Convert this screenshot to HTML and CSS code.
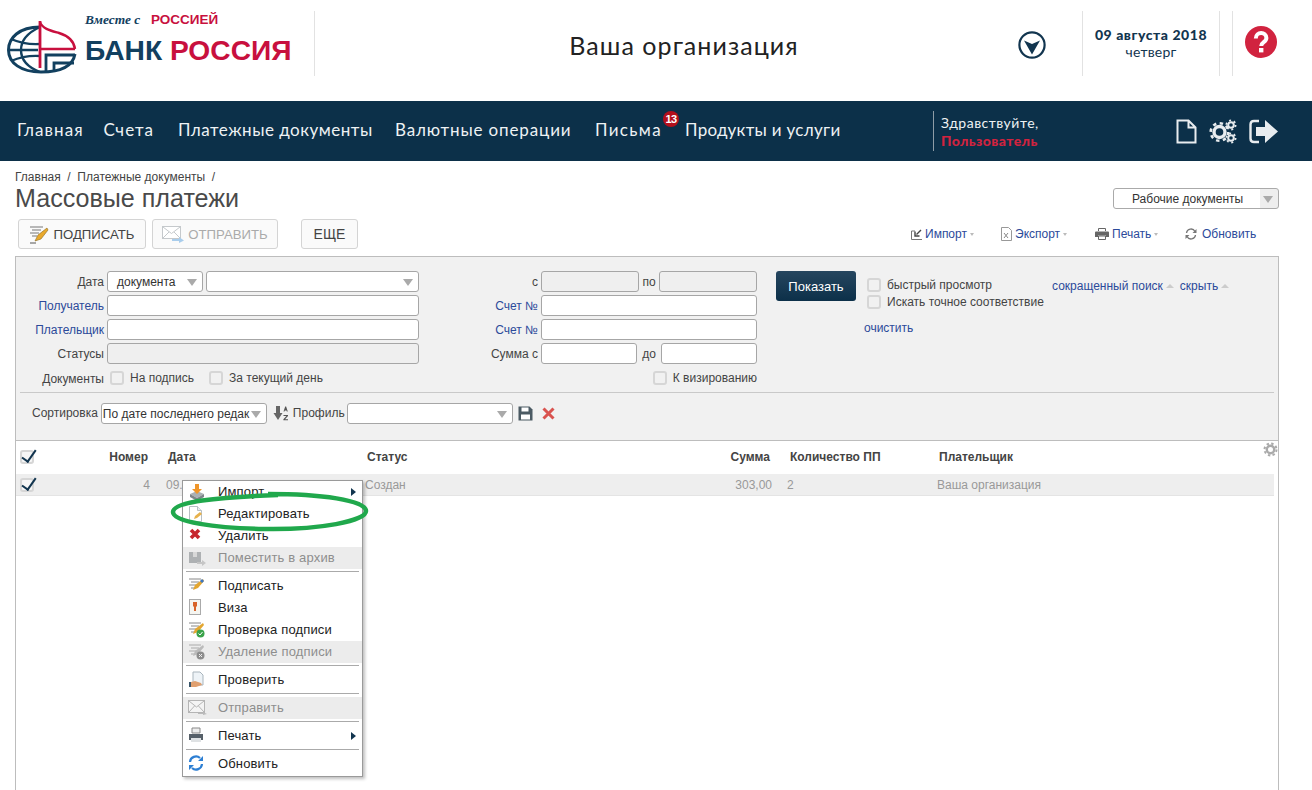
FILE: index.html
```html
<!DOCTYPE html>
<html lang="ru">
<head>
<meta charset="utf-8">
<title>Массовые платежи</title>
<link rel="stylesheet" href="styles.css">
</head>
<body>
<header class="top">
  <div class="logo">
    <svg class="logo-mark" width="70" height="53" viewBox="0 0 70 53">
      <path d="M33 6C12 6 1.500 17 1.500 29c0 13 12.500 22 32.500 22 21 0 32-7 34-18" fill="none" stroke="#12405f" stroke-width="3"/>
      <path d="M33 6C20 12 14 20 14 29s6 17 19 22" fill="none" stroke="#12405f" stroke-width="2.400"/>
      <path d="M4 18q14 6 29 5M4 40q14-6 29-5M1 29h30" fill="none" stroke="#12405f" stroke-width="2.400"/>
      <path d="M39 50V34h29M47 50V42h20" fill="none" stroke="#12405f" stroke-width="2.800"/>
      <path d="M33 0v47" stroke="#c8103e" stroke-width="2.800"/>
      <path d="M33 1c2 7 12 9 19 11 10 3 15 9 16 16" fill="none" stroke="#c8103e" stroke-width="2.400"/>
      <path d="M33 28h35" stroke="#c8103e" stroke-width="2.400"/>
    </svg>
    <div class="logo-text">
      <div class="tag"><em>Вместе с</em> <b>РОССИЕЙ</b></div>
      <div class="bank">БАНК <span>РОССИЯ</span></div>
    </div>
  </div>
  <div class="org">Ваша организация</div>
  <svg class="org-toggle" width="28" height="28" viewBox="0 0 28 28">
    <circle cx="14" cy="14" r="12.600" fill="none" stroke="#12354f" stroke-width="2.200"/>
    <path d="M6 9.500l8 3.500 8-3.500-8 14z" fill="#12354f"/>
  </svg>
  <div class="date"><b>09 августа 2018</b><span>четверг</span></div>
  <div class="help">
    <svg width="32" height="32" viewBox="0 0 32 32">
      <circle cx="16" cy="16" r="16" fill="#d1233f"/>
      <path d="M10.800 12.400c0-7 10.600-7 10.600-.4 0 4.400-5.200 4-5.200 8" fill="none" stroke="#fff" stroke-width="4"/>
      <rect x="14" y="22" width="4.400" height="4.400" fill="#fff"/>
    </svg>
  </div>
</header>

<nav class="nav">
  <div class="nav-links">
    <a class="w1">Главная</a>
    <a class="w2">Счета</a>
    <a class="w3">Платежные документы</a>
    <a class="w4">Валютные операции</a>
    <a class="w5">Письма<i class="badge">13</i></a>
    <a class="w6">Продукты и услуги</a>
  </div>
  <div class="hello">Здравствуйте,<b>Пользователь</b></div>
  <div class="nav-icons">
    <svg width="21" height="25" viewBox="0 0 21 25"><path d="M1.500 1.500h11l7 7v15h-18zM12.500 1.500v7h7" fill="none" stroke="#e8ecef" stroke-width="2"/></svg>
    <svg width="28" height="25" viewBox="0 0 28 25">
      <circle cx="10.500" cy="13" r="5.500" fill="none" stroke="#e8ecef" stroke-width="3.400"/>
      <circle cx="10.500" cy="13" r="8.800" fill="none" stroke="#e8ecef" stroke-width="2.600" stroke-dasharray="3.400 3.500"/>
      <circle cx="22" cy="6" r="2.800" fill="none" stroke="#e8ecef" stroke-width="2"/>
      <circle cx="22" cy="6" r="4.600" fill="none" stroke="#e8ecef" stroke-width="1.800" stroke-dasharray="2 2.800"/>
      <circle cx="22" cy="19" r="2.800" fill="none" stroke="#e8ecef" stroke-width="2"/>
      <circle cx="22" cy="19" r="4.600" fill="none" stroke="#e8ecef" stroke-width="1.800" stroke-dasharray="2 2.800"/>
    </svg>
    <svg width="29" height="25" viewBox="0 0 29 25">
      <path d="M10 2H5Q1.500 2 1.500 5.500v14Q1.500 23 5 23h5" fill="none" stroke="#e8ecef" stroke-width="2.400"/>
      <path d="M7 8h9V1l13 11.500L16 24v-7H7z" fill="#e8ecef"/>
    </svg>
  </div>
</nav>

<main class="page">
  <div class="crumbs">Главная &nbsp;/&nbsp; Платежные документы &nbsp;/</div>
  <div class="title-row">
    <h1>Массовые платежи</h1>
    <div class="doc-select"><span>Рабочие документы</span><i class="arrow"></i></div>
  </div>

  <div class="toolbar">
    <button class="btn">
      <svg width="20" height="20" viewBox="0 0 20 20"><path d="M1 3h13M3 6h9M1 9h9M3 12h5" stroke="#777" stroke-width="1.200"/><path d="M18 4l-9 7-3 6 6-2 7-9z" fill="#e9a92c" stroke="#8a6a20" stroke-width=".6"/><path d="M1 19h6" stroke="#555"/></svg>
      ПОДПИСАТЬ
    </button>
    <button class="btn off">
      <svg width="22" height="18" viewBox="0 0 22 18"><rect x=".500" y="1.500" width="18" height="12" fill="#fff" stroke="#c5c9cc"/><path d="M1 2l8.500 6.500L18 2M1 13l6-6M18 13l-6-6" fill="none" stroke="#c5c9cc"/><path d="M10 14h7v-2l5 3.500-5 2.500v-2h-7z" fill="#a9cdec"/></svg>
      ОТПРАВИТЬ
    </button>
    <button class="btn more">ЕЩЕ</button>
    <div class="tools">
      <a class="t1"><svg width="11" height="11" viewBox="0 0 11 11"><path d="M.500 2v8.500H11M.500 2H4" fill="none" stroke="#777"/><path d="M10 1L5.500 5.500M4 2.500V7h4.500" fill="none" stroke="#444" stroke-width="1.400"/></svg>Импорт<i class="caret"></i></a>
      <a class="t2"><svg width="11" height="14" viewBox="0 0 11 14"><path d="M.500.500h7l3 3v10H.500z" fill="#fff" stroke="#999"/><path d="M3 6l4 5M7 6l-4 5" stroke="#888"/></svg>Экспорт<i class="caret"></i></a>
      <a class="t3"><svg width="14" height="12" viewBox="0 0 14 12"><path d="M3.500 3V.500h7V3" fill="none" stroke="#666"/><path d="M1 3.500h12q1 0 1 1V9h-3v-1.500H3V9H0V4.500q0-1 1-1z" fill="#666"/><path d="M3.500 8h7v3.500h-7z" fill="none" stroke="#666"/></svg>Печать<i class="caret"></i></a>
      <a class="t4"><svg width="12" height="12" viewBox="0 0 12 12"><path d="M1.500 5A4.500 4.500 0 0 1 10 3.500M10.500 7A4.500 4.500 0 0 1 2 8.500" fill="none" stroke="#777" stroke-width="1.300"/><path d="M11.500 1v4h-4zM.500 11V7h4z" fill="#777"/></svg>Обновить</a>
    </div>
  </div>

  <section class="panel">
    <div class="filters">
      <div class="f-grid">
        <label>Дата</label>
        <div class="split">
          <div class="sel s-type"><span>документа</span><i class="arrow"></i></div>
          <div class="sel s-grow"><i class="arrow"></i></div>
        </div>
        <label>с</label>
        <div class="split gap-3">
          <input class="inp dis" disabled><span class="lbl">по</span><input class="inp dis" disabled>
        </div>

        <label class="lnk">Получатель</label>
        <input class="inp">
        <label class="lnk">Счет №</label>
        <input class="inp">

        <label class="lnk">Плательщик</label>
        <input class="inp">
        <label class="lnk">Счет №</label>
        <input class="inp">

        <label>Статусы</label>
        <input class="inp dis" disabled>
        <label>Сумма с</label>
        <div class="split gap-5">
          <input class="inp"><span class="lbl">до</span><input class="inp">
        </div>

        <label class="doc-l">Документы</label>
        <div class="checks">
          <span class="chk"><i class="box"></i>На подпись</span>
          <span class="chk"><i class="box"></i>За текущий день</span>
        </div>
        <span></span>
        <div class="checks end"><span class="chk"><i class="box"></i>К визированию</span></div>
      </div>

      <button class="show">Показать</button>
      <div class="opts">
        <span class="chk"><i class="box"></i>быстрый просмотр</span>
        <span class="chk"><i class="box"></i>Искать точное соответствие</span>
        <a class="clear">очистить</a>
      </div>
      <div class="links">
        <a>сокращенный поиск<i class="up"></i></a>
        <a>скрыть<i class="up"></i></a>
      </div>
    </div>

    <div class="sort">
      <span class="sort-l">Сортировка</span>
      <div class="sel s-sort"><span>По дате последнего редак</span><i class="arrow"></i></div>
      <svg class="az" width="16" height="15" viewBox="0 0 16 15"><path d="M3 0h4v7h2.500L5 14 .500 7H3z" fill="#666"/><path d="M12.200 .500l-1.700 5h1l.3-1h1.700l.3 1h1l-1.700-5zM10.500 9h4.500v1l-3 3.200h3v1h-4.600v-1l3-3.200h-2.900z" fill="#555"/></svg>
      <span class="sort-p">Профиль</span>
      <div class="sel s-prof"><i class="arrow"></i></div>
      <svg class="save" width="15" height="15" viewBox="0 0 15 15"><path d="M.500 .500h11l3 3v11H.500z" fill="#4b5a63"/><rect x="3.500" y="1.500" width="7" height="4" fill="#fff"/><rect x="3" y="8.500" width="9" height="5" fill="#fff"/></svg>
      <svg class="del" width="13" height="13" viewBox="0 0 13 13"><path d="M1.500 1.500l10 10M11.500 1.500l-10 10" stroke="#d9534f" stroke-width="3"/></svg>
    </div>
  </section>

  <section class="list">
    <div class="row head">
      <span class="mark"><i class="box on"></i></span>
      <span class="r">Номер</span><span class="c-date">Дата</span><span>Статус</span>
      <span class="r">Сумма</span><span class="c-count">Количество ПП</span><span>Плательщик</span>
    </div>
    <svg class="cog" width="15" height="15" viewBox="0 0 15 15">
      <circle cx="7.500" cy="7.500" r="3.700" fill="none" stroke="#aaa" stroke-width="2.400"/>
      <circle cx="7.500" cy="7.500" r="6" fill="none" stroke="#aaa" stroke-width="2" stroke-dasharray="2.400 2.310"/>
    </svg>
    <div class="row item">
      <span class="mark"><i class="box on"></i></span>
      <span class="r">4</span><span class="c-date">09.08.2018</span><span>Создан</span>
      <span class="r">303,00</span><span class="c-count">2</span><span>Ваша организация</span>
    </div>

    <div class="menu">
      <div class="mi"><svg width="18" height="18" viewBox="0 0 18 18"><path d="M2 11l7-3 7 3-7 4z" fill="#aab0b4"/><path d="M2 11v3l7 4 7-4v-3l-7 4z" fill="#7d8589"/><path d="M7 1h4v5h3l-5 5-5-5h3z" fill="#f0962a"/></svg>Импорт<i class="sub"></i></div>
      <div class="mi"><svg width="16" height="18" viewBox="0 0 16 18"><path d="M1.500 1.500h8l4 4v11h-12z" fill="#fff" stroke="#b7bfc4"/><path d="M9.500 1.500v4h4" fill="#e8ecef" stroke="#b7bfc4"/><path d="M6 14l1-3 5-4 2 2-5 4z" fill="#e7b24c"/></svg>Редактировать</div>
      <div class="mi"><svg width="14" height="14" viewBox="0 0 14 14"><path d="M3 3l8 8M11 3l-8 8" stroke="#c6262e" stroke-width="3.600"/></svg>Удалить</div>
      <div class="mi dis"><svg width="18" height="18" viewBox="0 0 18 18"><path d="M1 3h12v11H1z" fill="#aeb1b3"/><path d="M5 3h4v5H5z" fill="#d8d8d8"/><path d="M9 13h5v-2l4 3-4 3v-2H9z" fill="#c6c6c6"/></svg>Поместить в архив</div>
      <div class="ms"></div>
      <div class="mi"><svg width="16" height="16" viewBox="0 0 16 16"><path d="M1 2h12M3 5h8M1 8h7M3 11h4" stroke="#888"/><path d="M15 2l-8 6-2 5 5-2 6-7z" fill="#e3a631"/><path d="M12 4l2-2 2 2-2 2z" fill="#3b76c4"/></svg>Подписать</div>
      <div class="mi"><svg width="14" height="16" viewBox="0 0 14 16"><rect x="1.500" y=".500" width="11" height="15" fill="#f5f5f0" stroke="#aaa"/><path d="M5 3h4v4l-1 1v4H6V8L5 7z" fill="#d8642a"/></svg>Виза</div>
      <div class="mi"><svg width="17" height="17" viewBox="0 0 17 17"><path d="M1 2h12M3 5h8M1 8h7M3 11h4" stroke="#888"/><path d="M15 2l-8 6-2 5 5-2 6-7z" fill="#e3a631"/><circle cx="12.500" cy="12.500" r="4" fill="#3aa34a"/><path d="M10.500 12.500l1.500 1.500 2.500-3" fill="none" stroke="#fff"/></svg>Проверка подписи</div>
      <div class="mi dis"><svg width="17" height="17" viewBox="0 0 17 17"><path d="M1 2h12M3 5h8M1 8h7M3 11h4" stroke="#aaa"/><path d="M15 2l-8 6-2 5 5-2 6-7z" fill="#bbb"/><circle cx="12.500" cy="12.500" r="4" fill="#8d8d8d"/><path d="M11 11l3 3M14 11l-3 3" stroke="#eee"/></svg>Удаление подписи</div>
      <div class="ms"></div>
      <div class="mi"><svg width="17" height="17" viewBox="0 0 17 17"><path d="M5 1h7l3 3v10H5z" fill="#eef3f7" stroke="#a9b5bd"/><path d="M1 11h2v5H1z" fill="#39566b"/><path d="M3 11l4-1 6 2 1 2-6 2H3z" fill="#e0a070"/></svg>Проверить</div>
      <div class="ms"></div>
      <div class="mi dis"><svg width="19" height="16" viewBox="0 0 19 16"><rect x=".500" y="1.500" width="16" height="12" fill="#f4f4f4" stroke="#b5b5b5"/><path d="M1 2l7.500 6L16 2M1 13l5.500-6M16 13l-5.500-6" fill="none" stroke="#b5b5b5"/><path d="M10 14h5v-1l4 2-4 1v-1h-5z" fill="#bbb"/></svg>Отправить</div>
      <div class="ms"></div>
      <div class="mi"><svg width="16" height="16" viewBox="0 0 16 16"><path d="M4 1h8v5H4z" fill="#eee" stroke="#888"/><path d="M1 7h14v6H1z" fill="#566069"/><path d="M3 11h10v4H3z" fill="#dfe2e4"/></svg>Печать<i class="sub"></i></div>
      <div class="ms"></div>
      <div class="mi"><svg width="16" height="16" viewBox="0 0 16 16"><path d="M2 7a6 6 0 0 1 10-4" fill="none" stroke="#2d7fd3" stroke-width="2.200"/><path d="M15 1v5h-5zM1 15v-5h5z" fill="#2d7fd3"/><path d="M14 9a6 6 0 0 1-10 4" fill="none" stroke="#2d7fd3" stroke-width="2.200"/></svg>Обновить</div>
    </div>
    <svg class="circle" width="200" height="42" viewBox="0 0 200 42">
      <path d="M98 3C150 3 196 9 196 20c0 10-46 19-102 18C45 37 3 31 3 21 3 11 46 6 108 4" fill="none" stroke="#20a84c" stroke-width="4.500"/>
    </svg>
  </section>
</main>
</body>
</html>
```

FILE: styles.css
```css
* { box-sizing: border-box; }
html, body { margin: 0; padding: 0; }
body {
  width: 1312px;
  height: 790px;
  overflow: hidden;
  background: #fff;
  color: #333;
  font: 12px "Liberation Sans", Arial, sans-serif;
}
a { color: #2c4a9a; }
i { display: block; font-style: normal; }
svg { display: block; flex: none; }

/* header */
.top { display: flex; height: 101px; padding-top: 11px; align-items: flex-start; }
.logo { width: 315px; height: 65px; border-right: 1px solid #e2e2e2; padding-left: 7px; display: flex; }
.logo-mark { margin-top: 10px; }
.logo-text { margin-left: 8px; }
.tag { font-size: 13.500px; line-height: 18px; white-space: nowrap; }
.tag em { font: italic bold 13.400px "Liberation Serif", serif; color: #12405f; }
.tag b { color: #c8103e; margin-left: 7px; }
.bank { font: bold 28.200px/34px "Liberation Sans", sans-serif; color: #12405f; margin-top: 4px; white-space: nowrap; }
.bank span { color: #c8103e; }
.org { width: 738px; text-align: center; font: 25px/68px "Lato", sans-serif; color: #222; letter-spacing: 1.050px; }
.org-toggle { margin: 20px 36px 0 -35px; }
.date { width: 138px; height: 65px; border-left: 1px solid #e2e2e2; border-right: 1px solid #e2e2e2; display: flex; flex-direction: column; align-items: center; padding-top: 15px; font: 14px/18px "Lato", sans-serif; color: #12354f; }
.date b { font-weight: 900; letter-spacing: .55px; }
.date span { letter-spacing: .2px; margin-top: -1px; }
.help { margin-left: 12px; height: 65px; border-left: 1px solid #e2e2e2; padding: 15px 0 0 12px; }

/* nav */
.nav { display: flex; align-items: center; height: 60px; background: #0c3049; color: #eef2f4; padding-left: 17px; }
.nav-links { display: flex; width: 916px; font: 17px "Lato", sans-serif; padding-bottom: 4px; }
.nav-links a { color: #eef2f4; position: relative; white-space: nowrap; display: block; }
.w1 { width: 86.500px; letter-spacing: 1.100px; }
.w2 { width: 74.500px; letter-spacing: 1px; }
.w3 { width: 217px; letter-spacing: .5px; }
.w4 { width: 200px; letter-spacing: .85px; }
.w5 { width: 90px; letter-spacing: 1.350px; }
.w6 { letter-spacing: .3px; }
.badge { position: absolute; left: 68px; top: -8px; width: 16px; height: 16px; border-radius: 50%; background: #b30f1c; color: #fff; font: bold 11px/16px "Liberation Sans", sans-serif; text-align: center; letter-spacing: -.5px; }
.hello { height: 40px; border-left: 1px solid #8e9ca6; padding: 3px 0 0 7px; font: 14px/18px "Lato", sans-serif; letter-spacing: .5px; }
.hello b { display: block; color: #d1233f; font-weight: 900; letter-spacing: .4px; }
.nav-icons { display: flex; align-items: center; gap: 13px; margin-left: auto; padding-right: 34px; }
.nav-icons svg:first-child { margin-right: -1px; }
.nav-icons svg:nth-child(2) { margin-right: -1px; }

/* page head */
.page { padding-left: 15px; width: 1279px; }
.crumbs { padding-top: 10px; font-size: 12px; line-height: 13px; color: #444; }
.title-row { display: flex; justify-content: space-between; align-items: flex-start; height: 33px; }
h1 { margin: -1px 0 0; font: 25.100px/30px "Liberation Sans", sans-serif; color: #4a4a4a; }
.doc-select { width: 166px; height: 21px; margin-top: 4px; border: 1px solid #aaa; border-radius: 3px; display: flex; align-items: center; padding-left: 18px; background: linear-gradient(to left, #eee 18px, #fff 18px); position: relative; font-size: 12px; color: #333; }
.arrow { position: absolute; right: 5px; top: 50%; margin-top: -3px; border: 5px solid transparent; border-top: 7px solid #aaa; border-bottom: 0; }

/* toolbar */
.toolbar { display: flex; align-items: center; height: 32px; padding: 2px 0 0 3px; margin-bottom: 7px; }
.btn { height: 30px; border: 1px solid #d4d4d4; border-radius: 3px; background: #fafafa; font: 13.200px "Liberation Sans", sans-serif; color: #444; display: flex; align-items: center; justify-content: center; gap: 4px; padding: 0; width: 128px; }
.btn.off { color: #aaa; width: 126px; margin-left: 6px; }
.btn.more { width: 57px; margin-left: 23px; font-size: 14px; }
.tools { margin-left: auto; display: flex; position: relative; }
.tools a { display: flex; align-items: center; gap: 3px; white-space: nowrap; color: #2c4a9a; font-size: 12px; }
.t1 { width: 90px; } .t2 { width: 94px; } .t3 { width: 90px; } .t4 { width: 94px; gap: 5px !important; }
.caret { border: 2.500px solid transparent; border-top: 3px solid #bbb; border-bottom: 0; }

/* filter panel */
.panel { height: 185px; border: 1px solid #bdbdbd; background: #f1f1f1; padding-top: 14px; }
.filters { display: flex; align-items: flex-start; height: 121px; }
.f-grid { display: grid; grid-template-columns: 88px 312px 116px 216px; grid-auto-rows: 21px; gap: 3px; }
.f-grid label { text-align: right; align-self: center; white-space: nowrap; color: #444; }
.f-grid label.lnk { color: #2c4a9a; }
.doc-l { padding-top: 3px; }
.split { display: flex; gap: 3px; min-width: 0; }
.split .inp { flex: 1; min-width: 0; }
.gap-3 { gap: 3px; } .gap-5 { gap: 5px; }
.lbl { align-self: center; color: #444; }
.inp { display: block; height: 21px; width: 100%; border: 1px solid #a6a6a6; border-radius: 3px; background: #fff; padding: 0; }
.inp.dis { background: #efefef; }
.sel { height: 21px; border: 1px solid #a6a6a6; border-radius: 3px; background: #fff; position: relative; display: flex; align-items: center; overflow: hidden; white-space: nowrap; }
.s-type { width: 96px; padding-left: 9px; flex: none; }
.s-grow { flex: 1; }
.checks { display: flex; gap: 15px; align-items: center; padding-left: 3px; }
.checks.end { justify-content: flex-end; }
.chk { display: flex; align-items: center; gap: 6px; color: #444; white-space: nowrap; font-size: 12px; }
.box { width: 14px; height: 14px; border: 2px solid #d6d6d6; border-radius: 3px; background: #f1f1f1; flex: none; position: relative; }
.show { width: 80px; height: 30px; margin-left: 19px; border: 0; border-radius: 3px; background: linear-gradient(#26465f, #0c3049); color: #fff; font: 13px "Liberation Sans", sans-serif; padding: 0; flex: none; }
.opts { margin-left: 11px; width: 185px; display: flex; flex-direction: column; gap: 3px; padding-top: 7px; flex: none; }
.clear { font-size: 12px; color: #2c4a9a; margin: 9px 0 0 -3px; }
.links { display: flex; gap: 6px; padding-top: 8px; white-space: nowrap; }
.links a { display: flex; align-items: center; gap: 3px; color: #2c4a9a; }
.up { border: 4px solid transparent; border-bottom: 4px solid #ccc; border-top: 0; }

.sort { display: flex; align-items: center; margin: 0 4px; border-top: 1px solid #c9c9c9; padding: 10px 0 0 12px; font-size: 12px; color: #444; white-space: nowrap; }
.sort-l { margin-right: 3px; padding-bottom: 2px; }
.sort-p { padding-bottom: 2px; }
.s-sort { width: 166px; padding-left: 1px; color: #333; }
.az { margin: 0 4px 0 6px; }
.s-prof { width: 166px; margin-left: 2px; }
.save { margin-left: 5px; }
.del { margin-left: 9px; }

/* list */
.list { position: relative; height: 350px; border-left: 1px solid #bdbdbd; border-right: 1px solid #bdbdbd; }
.row { display: grid; align-items: center; width: 1258px; }
.row .r { text-align: right; }
.head { grid-template-columns: 88px 44px 219px 233px 170px 169px 1fr; height: 33px; padding-bottom: 2px; font-weight: bold; color: #444; }
.head .c-date { padding-left: 20px; }
.head .c-count { padding-left: 20px; }
.item { grid-template-columns: 90px 44px 215px 237px 170px 165px 1fr; height: 22px; background: #eee; color: #999; border-bottom: 1px solid #e4e4e4; }
.item .c-date { padding-left: 16px; }
.item .c-count { padding-left: 15px; }
.mark { padding-left: 4px; }
.box.on { background: #f6f6f6; }
.box.on::after { content: ""; position: absolute; left: 3px; top: -5px; width: 6px; height: 13px; border: solid #12354f; border-width: 0 2.500px 2.500px 0; transform: rotate(35deg); }
.cog { position: absolute; right: 0; top: 1px; }

.menu { position: absolute; left: 166px; top: 39px; width: 181px; height: 297px; background: #fff; border: 1px solid #9a9a9a; box-shadow: 2px 2px 3px rgba(0,0,0,.25); }
.mi { height: 22px; display: flex; align-items: center; position: relative; padding: 0 0 2px 35px; color: #222; font-size: 13px; letter-spacing: .15px; }
.mi svg { position: absolute; left: 5px; top: 2px; }
.mi.dis { background: #ececec; color: #8e8e8e; }
.ms { height: 6px; margin: 0 3px; position: relative; }
.ms::before { content: ""; position: absolute; left: 0; right: 0; top: 2px; height: 1px; background: #aaa; }
.sub { position: absolute; right: 6px; top: 7px; border: 4px solid transparent; border-left: 5px solid #12354f; border-right: 0; }
.circle { position: absolute; left: 154px; top: 50px; }
```
